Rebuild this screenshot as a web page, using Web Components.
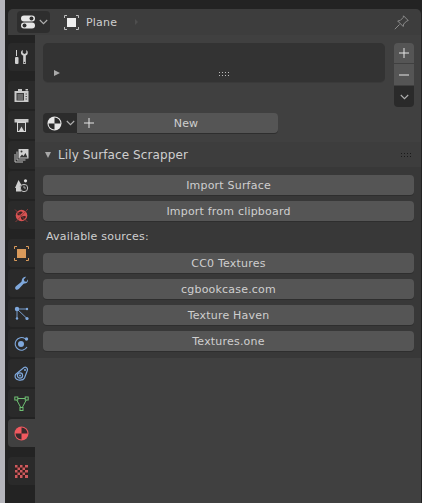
<!DOCTYPE html>
<html>
<head>
<meta charset="utf-8">
<style>
html, body { margin: 0; height: 100%; background: #232323; }
body { font: 11px "DejaVu Sans", sans-serif; color: #cfcfcf; overflow: hidden; }
</style>
</head>
<body>
<props-editor>
  <editor-header slot="header"></editor-header>
  <tab-column slot="tabs"></tab-column>
  <material-context></material-context>
  <addon-panel label="Lily Surface Scrapper">
    <ui-button>Import Surface</ui-button>
    <ui-button>Import from clipboard</ui-button>
    <span style="display:block;height:20px;line-height:20px;padding:0 3px;letter-spacing:.2px">Available sources:</span>
    <ui-button>CC0 Textures</ui-button>
    <ui-button>cgbookcase.com</ui-button>
    <ui-button>Texture Haven</ui-button>
    <ui-button>Textures.one</ui-button>
  </addon-panel>
</props-editor>

<script>
// two rows of four dots, the drag handle of lists and panels
const grip = (color) => `<svg width="10" height="4" viewBox="0 0 10 4" fill="${color}"><path d="M0 0h1v1H0zM3 0h1v1H3zM6 0h1v1H6zM9 0h1v1H9zM0 3h1v1H0zM3 3h1v1H3zM6 3h1v1H6zM9 3h1v1H9z"/></svg>`;
const CHEVRON = `<svg width="9" height="6" viewBox="0 0 9 6" fill="none" stroke="#b0b0b0" stroke-width="1.1"><path d="M.8 1l3.700 3.700L8.200 1"/></svg>`;

class PropsEditor extends HTMLElement {
  constructor() {
    super();
    this.attachShadow({mode: 'open'}).innerHTML = `
    <style>
      :host { display: grid; grid-template-columns: 5px 30px 1fr; grid-template-rows: 9px 26px 1fr; width: 422px; height: 503px; background: #232323; }
      .edge { grid-row: 1 / 4; grid-column: 1; background: #b6b6bc; }
      .top { grid-column: 2 / 4; grid-row: 1; }
      .head { grid-column: 2 / 4; grid-row: 2; padding: 0 1px 0 3px; }
      .tabs { grid-column: 2; grid-row: 3; }
      .main { grid-column: 3; grid-row: 3; background: #404040; display: flex; flex-direction: column; margin-right: 1px; }
    </style>
    <div class="edge"></div><div class="top"></div>
    <div class="head"><slot name="header"></slot></div>
    <div class="tabs"><slot name="tabs"></slot></div>
    <div class="main"><slot></slot></div>`;
  }
}

class EditorHeader extends HTMLElement {
  constructor() {
    super();
    this.attachShadow({mode: 'open'}).innerHTML = `
    <style>
      :host { display: flex; align-items: center; height: 26px; background: #3d3d3d; border-radius: 5px 5px 0 0; }
      .mode { display: flex; align-items: center; gap: 4px; width: 33px; height: 22px; margin-left: 9px; background: #2e2e2e; border-radius: 4px; box-sizing: border-box; padding-left: 4px; }
      .obj { margin-left: 14px; display: flex; }
      .name { margin-left: 7px; letter-spacing: .2px; }
      .more { margin-left: 18px; width: 0; height: 0; border-left: 3px solid #4e4e4e; border-top: 3px solid transparent; border-bottom: 3px solid transparent; }
      .pin { margin-left: auto; margin-right: 12px; display: flex; }
    </style>
    <div class="mode">
      <svg width="14" height="14" viewBox="0 0 14 14"><rect y=".5" width="14" height="6" rx="3" fill="#e6e6e6"/><circle cx="10.500" cy="3.500" r="2" fill="#2e2e2e"/><rect y="7.500" width="14" height="6" rx="3" fill="#e6e6e6"/><circle cx="3.500" cy="10.500" r="2" fill="#2e2e2e"/></svg>
      ${CHEVRON}
    </div>
    <span class="obj"><svg width="15" height="15" viewBox="0 0 15 15" fill="none"><rect x="3" y="3" width="9" height="9" fill="#f0f0f0"/><path d="M.5 3V.5H3M12 .5h2.500V3M14.500 12v2.500H12M3 14.500H.5V12" stroke="#bdbdbd"/></svg></span>
    <span class="name">Plane</span>
    <span class="more"></span>
    <span class="pin"><svg width="15" height="15" viewBox="0 0 15 15" fill="none" stroke="#8c8c8c"><path d="M9.500.8l4.700 4.700-1.500.5-3 3-.5 2.500-5.500-5.500 2.500-.5 3-3zM5.500 9.500L.8 14.200"/></svg></span>`;
  }
}

const TAB_ICONS = {
  tool: `<path d="M2.500 0v6" stroke="#d0d0d0"/><rect x="1" y="7" width="3.500" height="7" rx="1" fill="#d0d0d0"/><path d="M8.700 0v3l1.800 1 1.800-1V0c1.300.8 1.700 2.300 1.300 3.700-.3 1-1.100 1.500-1.800 1.800V14h-2.600V5.500C8 5.100 7.200 4.300 7 3.200 6.800 2 7.500.6 8.700 0z" fill="#d0d0d0"/><circle cx="10.500" cy="12.500" r=".7" fill="#333"/>`,
  render: `<path d="M.5 3h14v11H.5z" fill="#c9c9c9"/><path d="M4 1h4v2H4zM11.500 1h2.500v1.500h-2.500z" fill="#c9c9c9"/><path d="M2.500 5h7.500v7.500H2.500z" fill="#3a3a3a"/><path d="M3.500 7h5.500M3.500 9h5.500M3.500 11h5.500" stroke="#b5b5b5" stroke-width=".8"/><path d="M11.500 6h1.500M11.500 8.500h1.500M11.500 11h1.500" stroke="#555"/>`,
  output: `<path d="M.5 1h14v3.500H.5z" fill="#c9c9c9"/><path d="M3 3.500h9V14H3z" fill="#d6d6d6"/><path d="M4 5h7v8H4z" fill="#3a3a3a"/><path d="M5 13l2.500-4.500L10 13z" fill="#d6d6d6"/>`,
  view: `<path d="M4.500 1H14.500V10.500H4.500z" fill="#d0d0d0"/><path d="M5.500 9.500l2.500-3 1.500 1.500 2-3 2 4.500z" fill="#333"/><circle cx="7.500" cy="3.500" r="1" fill="#333"/><path d="M3 3.500v8.500h8.500M1 6v8h8" fill="none" stroke="#c0c0c0"/>`,
  scene: `<path d="M4.500 2L1 10h3.500l3-3z" fill="#d0d0d0"/><path d="M2 8.500h5v5H2z" fill="#d0d0d0"/><circle cx="11.500" cy="2.800" r="1.600" fill="#e0e0e0"/><circle cx="10" cy="10" r="3.700" fill="#2b2b2b" stroke="#c0c0c0"/><path d="M10 7.500v2.500h2" stroke="#c0c0c0" fill="none" stroke-width=".8"/>`,
  world: `<circle cx="7.500" cy="7.500" r="5.800" fill="#d85252"/><path d="M3.500 5c2-1.500 4-2 5-1 .5 1-1 1.500-2 2.500s-2 1-3 .5zM7 9c1.500-1 4-1.500 5-.5-.5 2-2 3-3.500 3.500C7.500 11.500 6.500 10 7 9z" fill="#3a2222"/><path d="M1 1.500l12.500 12.500M14 1L1.500 14" stroke="#8d3c3c" stroke-width=".9" fill="none"/>`,
  object: `<rect x="3" y="3" width="9" height="9" fill="#d99a5b"/><path d="M.5 3V.5H3M12 .5h2.500V3M14.500 12v2.500H12M3 14.500H.5V12" stroke="#d99a5b" fill="none"/>`,
  modifier: `<path d="M13.800 3.200c.5 1.800-.2 3.500-2 4.100-1 .3-1.600.2-2.200.5L5 12.800c-1 1-2.500 1.300-3.400.4-.9-1-.4-2.500.6-3.300l5-4c.5-.5.5-1 .6-2C8.200 2 10 .5 12.200.8L9.800 3.500l.8 2 2 .3z" fill="#7fa8dc"/>`,
  particles: `<circle cx="3" cy="3" r="2.200" fill="#7fa8dc"/><circle cx="13" cy="12.500" r="1.600" fill="#7fa8dc"/><circle cx="3" cy="12.500" r="1.200" fill="#7fa8dc"/><circle cx="13" cy="3" r="1.200" fill="#7fa8dc"/><path d="M3 3v9.500M3 3h10M3 3l10 9.500" stroke="#7fa8dc" stroke-width=".9"/>`,
  physics: `<circle cx="7" cy="8" r="3" fill="#7fa8dc"/><path d="M11 2.600A6.300 6.300 0 1 0 13 11" fill="none" stroke="#7fa8dc" stroke-width="1.100"/><circle cx="12.500" cy="3" r="1.700" fill="#7fa8dc"/>`,
  constraint: `<path d="M1.500 8.500L10 1.500c1.800-.9 4 .5 3.300 3L10.500 12c-1 2-3 2.500-6 2s-4-3-3-5.500z" fill="none" stroke="#7fa8dc" stroke-width="1.200"/><circle cx="6" cy="9.500" r="2.600" fill="none" stroke="#7fa8dc" stroke-width="1.200"/><circle cx="6" cy="9.500" r="1" fill="#7fa8dc"/><circle cx="11" cy="4" r="1" fill="#7fa8dc"/>`,
  data: `<path d="M2 2.500h11L7.500 13z" fill="none" stroke="#6fbf73"/><rect x=".8" y="1" width="3" height="3" fill="#2a2a2a" stroke="#6fbf73"/><rect x="11.200" y="1" width="3" height="3" fill="#2a2a2a" stroke="#6fbf73"/><rect x="6" y="11.500" width="3" height="3" fill="#2a2a2a" stroke="#6fbf73"/>`,
  material: `<circle cx="7.500" cy="7.500" r="7" fill="#f0595f"/><path d="M7.500 1.500a6 6 0 0 1 6 6h-6zM7.500 7.500v6a6 6 0 0 1-6-6z" fill="#3a2a2c"/>`,
  texture: `<rect x="1" y="1" width="13" height="13" fill="#cf5a5e"/><path fill="#35201f" d="M3.500 1h2.500v2.500H3.500zM8.500 1h2.500v2.500H8.500zM1 3.500h2.500V6H1zM6 3.500h2.500V6H6zM11 3.500h3V6h-3zM3.500 6H6v2.500H3.500zM8.500 6H11v2.500H8.500zM1 8.500h2.500V11H1zM6 8.500h2.500V11H6zM11 8.500h3V11h-3zM3.500 11H6v3H3.500zM8.500 11H11v3H8.500z"/>`
};

// tab column: icon name and margin-top of the group it opens
const TABS = [
  ['tool', 8], ['render', 8], ['output', 0], ['view', 0], ['scene', 0], ['world', 0],
  ['object', 8], ['modifier', 0], ['particles', 0], ['physics', 0], ['constraint', 0], ['data', 0],
  ['material', 0], ['texture', 8]
];

class TabColumn extends HTMLElement {
  constructor() {
    super();
    const items = TABS.map(([n, m]) => `<div class="tab ${n === 'material' ? 'on' : ''}" style="margin-top:${m}px">
      <svg width="15" height="15" viewBox="0 0 15 15">${TAB_ICONS[n]}</svg></div>`).join('');
    this.attachShadow({mode: 'open'}).innerHTML = `
    <style>
      :host { display: flex; flex-direction: column; padding-left: 3px; gap: 2px; }
      .tab { height: 28px; background: #2a2a2a; border-radius: 4px 0 0 4px; display: flex; align-items: center; justify-content: center; }
      .tab.on { background: #404040; }
    </style>${items}`;
  }
}

class MaterialContext extends HTMLElement {
  constructor() {
    super();
    this.attachShadow({mode: 'open'}).innerHTML = `
    <style>
      :host { display: block; padding: 8px 7px 0 8px; height: 99px; flex: none; }
      .top { display: flex; gap: 9px; height: 70px; }
      .list { flex: 1; height: 39px; background: #333; border-radius: 5px; position: relative; box-shadow: 0 1px 0 #3a3a3a; }
      .tri { position: absolute; left: 11px; bottom: 6px; width: 0; height: 0; border-left: 6px solid #aaa; border-top: 3px solid transparent; border-bottom: 3px solid transparent; }
      .grip { position: absolute; left: 50%; margin-left: 5px; bottom: 6px; line-height: 0; }
      .side { width: 20px; display: flex; flex-direction: column; }
      .side div { background: #555; display: flex; align-items: center; justify-content: center; }
      .side .plus { height: 20px; border-radius: 4px 4px 0 0; margin-bottom: 1px; }
      .side .minus { height: 21px; margin-bottom: 1px; }
      .side .more { height: 21px; background: #2a2a2a; border-radius: 0 0 4px 4px; }
      .new { display: flex; height: 20px; width: 235px; }
      .browse { width: 34px; background: #2c2c2c; border-radius: 4px 0 0 4px; display: flex; align-items: center; gap: 4px; padding-left: 4px; box-sizing: border-box; }
      .btn { flex: 1; background: #555; border-radius: 0 4px 4px 0; display: flex; align-items: center; justify-content: center; padding-left: 17px; position: relative; box-shadow: 0 1px 0 #2e2e2e; letter-spacing: .2px; }
      .btn svg { position: absolute; left: 7px; top: 5px; }
    </style>
    <div class="top">
      <div class="list"><span class="tri"></span><span class="grip">${grip('#bdbdbd')}</span></div>
      <div class="side">
        <div class="plus"><svg width="10" height="10" viewBox="0 0 10 10" stroke="#e6e6e6"><path d="M5 0v10M0 5h10"/></svg></div>
        <div class="minus"><svg width="10" height="2" viewBox="0 0 10 2" stroke="#e6e6e6"><path d="M0 1h10"/></svg></div>
        <div class="more">${CHEVRON}</div>
      </div>
    </div>
    <div class="new">
      <div class="browse"><svg width="15" height="15" viewBox="0 0 15 15"><circle cx="7.500" cy="7.500" r="7" fill="#e8e8e8"/><path d="M7.500 1.500a6 6 0 0 1 6 6h-6zM7.500 7.500v6a6 6 0 0 1-6-6z" fill="#2c2c2c"/></svg>${CHEVRON}</div>
      <div class="btn"><svg width="10" height="10" viewBox="0 0 10 10" stroke="#e6e6e6"><path d="M5 0v10M0 5h10"/></svg>New</div>
    </div>`;
  }
}

class AddonPanel extends HTMLElement {
  constructor() {
    super();
    this.attachShadow({mode: 'open'}).innerHTML = `
    <style>
      :host { display: block; flex: none; }
      .head { height: 25px; background: #3d3d3d; display: flex; align-items: center; padding: 0 10px 0 10px; }
      .tri { width: 0; height: 0; border-top: 6px solid #a8a8a8; border-left: 3.500px solid transparent; border-right: 3.500px solid transparent; margin-right: 7px; }
      .t { letter-spacing: .1px; font-size: 12px; flex: 1; }
      .grip { line-height: 0; }
      .body { background: #383838; padding: 8px 7px 7px 8px; display: flex; flex-direction: column; gap: 6px; }
    </style>
    <div class="head"><span class="tri"></span><span class="t">${this.getAttribute('label')}</span><span class="grip">${grip('#1a1a1a')}</span></div>
    <div class="body"><slot></slot></div>`;
  }
}

class UiButton extends HTMLElement {
  constructor() {
    super();
    this.attachShadow({mode: 'open'}).innerHTML = `
    <style>
      :host { display: flex; align-items: center; justify-content: center; height: 20px; background: #555; border-radius: 4px; letter-spacing: .2px; box-shadow: 0 1px 0 #2e2e2e; }
    </style><slot></slot>`;
  }
}

customElements.define('props-editor', PropsEditor);
customElements.define('editor-header', EditorHeader);
customElements.define('tab-column', TabColumn);
customElements.define('material-context', MaterialContext);
customElements.define('addon-panel', AddonPanel);
customElements.define('ui-button', UiButton);
</script>
</body>
</html>
